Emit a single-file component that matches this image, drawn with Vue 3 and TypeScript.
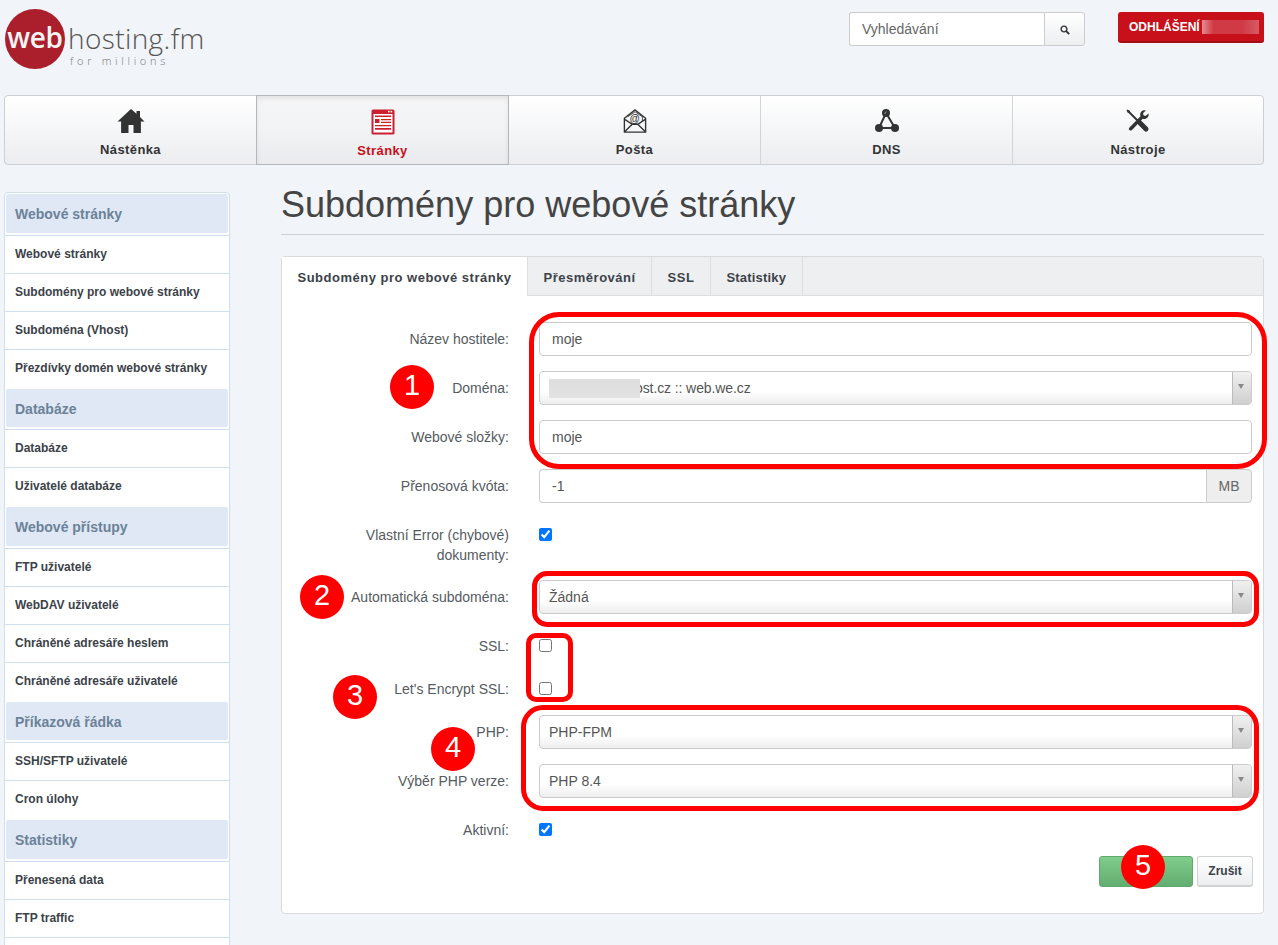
<script setup lang="ts">
interface Section { title: string; items: string[] }
const sections: Section[] = [
  { title: 'Webové stránky', items: ['Webové stránky', 'Subdomény pro webové stránky', 'Subdoména (Vhost)', 'Přezdívky domén webové stránky'] },
  { title: 'Databáze', items: ['Databáze', 'Uživatelé databáze'] },
  { title: 'Webové přístupy', items: ['FTP uživatelé', 'WebDAV uživatelé', 'Chráněné adresáře heslem', 'Chráněné adresáře uživatelé'] },
  { title: 'Příkazová řádka', items: ['SSH/SFTP uživatelé', 'Cron úlohy'] },
  { title: 'Statistiky', items: ['Přenesená data', 'FTP traffic', ''] },
]
const tabs = ['Subdomény pro webové stránky', 'Přesměrování', 'SSL', 'Statistiky']
</script>

<template>
  <div class="page">
    <header class="top">
      <div class="logo">
        <div class="logo-circle">web</div>
        <div class="logo-text">
          <div class="logo-name">hosting.fm</div>
          <div class="logo-sub">for millions</div>
        </div>
      </div>
      <div class="search">
        <input class="search-input" type="text" placeholder="Vyhledávání" />
        <button class="search-btn" type="button" aria-label="Hledat">
          <svg width="10" height="10" viewBox="0 0 10 10"><circle cx="4" cy="4" r="2.9" fill="none" stroke="#333" stroke-width="1.4"/><path d="M6.2 6.2 9.2 9.2" stroke="#333" stroke-width="1.9"/></svg>
        </button>
      </div>
      <button class="logout" type="button">ODHLÁŠENÍ <span class="logout-blur"></span></button>
    </header>

    <nav class="nav">
      <a class="nav-item">
        <svg class="nav-icon" width="30" height="26" viewBox="0 0 30 26"><path fill="#333" d="M15 1 1.5 13.5h3.6V25h7.4v-8h5v8h7.4V13.5h3.6L24 9V3h-3.5v2.8Z"/></svg>
        <span>Nástěnka</span>
      </a>
      <a class="nav-item active">
        <svg class="nav-icon" width="24" height="26" viewBox="0 0 24 26">
          <rect x="0.5" y="0.5" width="23" height="25" rx="1.5" fill="#cc2030"/>
          <rect x="2.5" y="5" width="19" height="18.5" fill="#fff"/>
          <rect x="17" y="1.8" width="1.6" height="1.6" fill="#fff"/><rect x="19.6" y="1.8" width="1.6" height="1.6" fill="#fff"/>
          <path fill="#cc2030" d="M4 6.5h16V8H4zM4 10h4.5v4H4zM10 10h10v1.2H10zM10 12.8h10V14H10zM4 16h16v1.2H4zM4 19h16v1.8H4z"/>
        </svg>
        <span>Stránky</span>
      </a>
      <a class="nav-item">
        <svg class="nav-icon" width="24" height="26" viewBox="0 0 26 26">
          <path fill="none" stroke="#333" stroke-width="1.5" d="M1.5 10 13 1l11.5 9v15h-23ZM1.5 25 10 16.5M24.5 25 16 16.5M1.5 11l8.5 5.5h6l8.5-5.5"/>
          <path fill="none" stroke="#333" stroke-width=".9" d="M5 8.5 13 3l8 5.5v5"/>
          <text x="13" y="14" text-anchor="middle" font-size="11" font-family="Liberation Sans" font-weight="700" fill="#333">@</text>
        </svg>
        <span>Pošta</span>
      </a>
      <a class="nav-item">
        <svg class="nav-icon" width="26" height="26" viewBox="0 0 26 26">
          <path fill="none" stroke="#333" stroke-width="2" d="M12 5 5 20h16Z"/>
          <circle cx="12" cy="5" r="4" fill="#333"/>
          <circle cx="5" cy="20" r="4" fill="#333"/>
          <circle cx="21" cy="20" r="4" fill="#333"/>
          <path d="M10.8 6 12 3.5" stroke="#fff" stroke-width="1" opacity=".5"/>
        </svg>
        <span>DNS</span>
      </a>
      <a class="nav-item">
        <svg class="nav-icon" width="26" height="26" viewBox="0 0 26 26">
          <path d="M3 3 13 13" stroke="#333" stroke-width="2"/>
          <path d="M2.5 1.5 1.5 2.5l1.5 2.5 1.5-.5.5-1.500Z" fill="#333"/>
          <path d="M15 15 21 21" stroke="#333" stroke-width="5" stroke-linecap="round"/>
          <path fill="#333" d="M23.5 5.5 20.5 8 18.5 7.3 18 5.3l2.8-2.8C18 1.7 15 3.7 15.2 6.8c0 .6.1 1 .3 1.5L4.5 19.5C2.8 21.3 5.1 23.8 7 22L17.8 10.8c3.2 1 6.500-1.500 5.700-5.300Z"/>
        </svg>
        <span>Nástroje</span>
      </a>
    </nav>

    <div class="content">
      <aside class="sidebar">
        <template v-for="s in sections" :key="s.title">
          <div class="side-head-wrap"><div class="side-head">{{ s.title }}</div></div>
          <a v-for="(it, i) in s.items" :key="it" class="side-item" :class="{ last: i === s.items.length - 1 }">{{ it }}</a>
        </template>
      </aside>

      <main class="main">
        <h1 class="title">Subdomény pro webové stránky</h1>
        <section class="panel">
          <div class="tabs">
            <a v-for="(t, i) in tabs" :key="t" class="tab" :class="{ on: i === 0 }">{{ t }}</a>
          </div>
          <form class="form" @submit.prevent>
            <div class="row">
              <label class="lbl">Název hostitele:</label>
              <input class="ctl" type="text" value="moje" />
            </div>
            <div class="row">
              <label class="lbl">Doména:</label>
              <div class="sel"><span class="blur"></span><span class="after-blur">ost.cz :: web.we.cz</span><i class="arrow"></i></div>
            </div>
            <div class="row">
              <label class="lbl">Webové složky:</label>
              <input class="ctl" type="text" value="moje" />
            </div>
            <div class="row">
              <label class="lbl">Přenosová kvóta:</label>
              <div class="group">
                <input class="ctl grp-input" type="text" value="-1" />
                <span class="addon">MB</span>
              </div>
            </div>
            <div class="row tall">
              <label class="lbl">Vlastní Error (chybové)<br />dokumenty:</label>
              <div class="chk"><input type="checkbox" checked /></div>
            </div>
            <div class="row">
              <label class="lbl">Automatická subdoména:</label>
              <div class="sel">Žádná<i class="arrow"></i></div>
            </div>
            <div class="row short">
              <label class="lbl">SSL:</label>
              <div class="chk"><input type="checkbox" /></div>
            </div>
            <div class="row short">
              <label class="lbl">Let's Encrypt SSL:</label>
              <div class="chk"><input type="checkbox" /></div>
            </div>
            <div class="row">
              <label class="lbl">PHP:</label>
              <div class="sel">PHP-FPM<i class="arrow"></i></div>
            </div>
            <div class="row">
              <label class="lbl">Výběr PHP verze:</label>
              <div class="sel">PHP 8.4<i class="arrow"></i></div>
            </div>
            <div class="row short">
              <label class="lbl">Aktivní:</label>
              <div class="chk"><input type="checkbox" checked /></div>
            </div>
            <div class="actions">
              <button class="save" type="button"></button>
              <button class="cancel" type="button">Zrušit</button>
            </div>
          </form>
        </section>
      </main>
    </div>

    <div class="ring r1"></div>
    <div class="ring r2"></div>
    <div class="ring r3"></div>
    <div class="ring r4"></div>
    <div class="num n1">1</div>
    <div class="num n2">2</div>
    <div class="num n3">3</div>
    <div class="num n4">4</div>
    <div class="num n5">5</div>
  </div>
</template>

<style>
html, body { margin: 0; background: #f1f4f8; }
</style>

<style scoped>
.page { position: relative; height: 945px; width: 1278px; overflow: hidden; box-sizing: border-box; padding: 0 14px 0 4px; font-family: "Liberation Sans", Arial, sans-serif; color: #333; background: #f1f4f8; }
.top { height: 95px; display: flex; align-items: flex-start; }
.logo { position: relative; display: flex; width: 845px; height: 95px; }
.logo-circle { width: 60px; height: 60px; margin: 9px 0 0 1px; border-radius: 50%; background: #ab1f2d; color: #f4f4f4; font: 600 28px/56px "Open Sans", sans-serif; text-align: center; letter-spacing: -0.3px; }
.logo-text { margin-left: 3px; }
.logo-name { margin-top: 22px; font: 300 28px/32px "Open Sans", sans-serif; color: #555; letter-spacing: .4px; }
.logo-sub { margin: 1px 0 0 2px; font: 300 11px/12px "Open Sans", sans-serif; letter-spacing: 3.7px; color: #777; }
.search { display: flex; margin-top: 12px; height: 34px; width: 236px; }
.search-input { flex: 1; min-width: 0; box-sizing: border-box; height: 34px; border: 1px solid #ccc; border-right: 0; border-radius: 3px 0 0 3px; padding: 0 12px; font: 14px "Liberation Sans", sans-serif; color: #555; background: #fff; outline: none; }
.search-input::placeholder { color: #666; opacity: 1; }
.search-btn { width: 41px; height: 34px; box-sizing: border-box; border: 1px solid #ccc; border-radius: 0 3px 3px 0; background: linear-gradient(#fff, #eceef0); padding: 2px 0 0; display: flex; align-items: center; justify-content: center; }
.logout { margin: 12px 0 0 33px; width: 146px; height: 31px; box-sizing: border-box; border: 0; border-bottom: 2px solid #a30d15; border-radius: 3px; background: #c8101a; color: #fff; font: 700 12px "Liberation Sans", sans-serif; text-align: left; padding: 0 0 0 11px; white-space: nowrap; }
.logout-blur { display: inline-block; width: 57px; height: 14px; vertical-align: -3px; margin-left: -1px; background: linear-gradient(90deg, #e58d92, #d03a45 20%, #cf3a45 70%, #d75b64); }

.nav { display: flex; height: 70px; box-sizing: border-box; border: 1px solid #ccd0d4; border-radius: 4px; background: linear-gradient(#fff, #ebedf0); }
.nav-item { width: 252px; box-sizing: border-box; border-right: 1px solid #d2d5d8; display: flex; flex-direction: column; align-items: center; font-size: 13px; font-weight: 700; color: #333; padding-top: 12px; letter-spacing: .4px; }
.nav-item:first-child { border-right: 0; width: 251px; }
.nav-item:last-child { border-right: 0; flex: 1; }
.nav-icon { height: 26px; display: block; margin-bottom: 7px; }
.nav-item span { line-height: 18px; }
.nav-item.active { color: #c8101a; margin: -1px 0; height: 70px; width: 253px; border: 1px solid #b4b8bc; border-radius: 0; box-shadow: inset 0 3px 5px rgba(0,0,0,.08); background: linear-gradient(#f6f6f7, #f2f3f5 50%, #e9ebee); padding-top: 13px; }

.content { display: flex; margin-top: 27px; align-items: flex-start; }
.sidebar { width: 226px; box-sizing: border-box; border: 1px solid #cfdfee; border-radius: 4px; background: #fff; flex: none; }
.side-head-wrap { height: 42.5px; box-sizing: border-box; padding: 1px 1px 2px; border-bottom: 1px solid #cfdfee; }
.side-head { height: 100%; background: #dfe8f4; border-radius: 2px; padding-left: 9px; font-size: 14px; font-weight: 700; color: #6b8299; line-height: 40px; }
.side-item { display: block; height: 38px; box-sizing: border-box; border-bottom: 1px solid #cfdfee; padding-left: 10px; font-size: 12px; font-weight: 700; color: #3c4249; line-height: 36px; white-space: nowrap; }
.side-item.last { border-bottom-color: transparent; }

.main { width: 983px; margin-left: 51px; flex: none; margin-top: -8px; }
.title { margin: 0; height: 51px; box-sizing: border-box; border-bottom: 1px solid #ccd0d4; font-size: 36px; font-weight: 400; line-height: 42px; color: #444; }
.panel { margin-top: 21px; border: 1px solid #d8dadd; border-radius: 4px; background: #fff; }
.tabs { display: flex; height: 39px; background: #eeeff1; border-bottom: 1px solid #dcdee0; box-sizing: border-box; }
.tab { padding: 0 15.5px; line-height: 41px; font-size: 13px; font-weight: 700; color: #3c4249; border-right: 1px solid #dcdee0; white-space: nowrap; letter-spacing: .5px; }
.tab:last-child { letter-spacing: .2px; }
.tab.on { background: #fff; height: 39px; }
.form { padding: 26px 11px 26px 0; }
.row { display: grid; grid-template-columns: 227px 1fr; column-gap: 30px; margin-bottom: 15px; min-height: 34px; }
.row.tall { height: 47px; }
.row.short { height: 28px; min-height: 28px; }
.lbl { text-align: right; font-size: 14px; line-height: 20px; color: #555b61; padding-top: 7px; }
.ctl { box-sizing: border-box; width: 100%; height: 34px; border: 1px solid #ccc; border-radius: 4px; padding: 0 12px; font: 14px "Liberation Sans", sans-serif; color: #555; background: #fff; outline: none; }
.group { display: flex; }
.grp-input { flex: 1; min-width: 0; border-radius: 4px 0 0 4px; border-right: 0; }
.addon { width: 46px; height: 34px; box-sizing: border-box; border: 1px solid #ccc; border-radius: 0 4px 4px 0; background: #eee; text-align: center; font-size: 14px; line-height: 32px; color: #666; }
.sel { position: relative; height: 34px; box-sizing: border-box; border: 1px solid #ccc; border-radius: 4px; padding-left: 9px; font-size: 14px; line-height: 32px; color: #555; background: linear-gradient(#fff 60%, #eee); white-space: nowrap; }
.arrow { position: absolute; top: 0; right: 0; bottom: 0; width: 18px; border-left: 1px solid #bbb; border-radius: 0 3px 3px 0; background: linear-gradient(#f0f0f0, #cfcfcf); }
.arrow::after { content: ""; position: absolute; left: 5px; top: 12px; border: 3.5px solid transparent; border-top: 5px solid #888; border-bottom: 0; }
.blur { display: inline-block; width: 91px; height: 19px; vertical-align: -5px; background: linear-gradient(#dedede, #e2e2e2); margin-right: -5px; position: relative; z-index: 1; }
.after-blur { position: relative; letter-spacing: -.1px; }
.chk { height: 28px; padding-top: 10px; box-sizing: border-box; }
.chk input { margin: 0; width: 13px; height: 13px; display: block; }
.actions { display: flex; justify-content: flex-end; margin-top: 15px; margin-right: -1px; gap: 4px; }
.save { width: 94px; height: 31px; box-sizing: border-box; border: 1px solid #5fa96c; border-radius: 3px; background: linear-gradient(#80cd8c, #62ad70); }
.cancel { width: 56px; height: 31px; box-sizing: border-box; border: 1px solid #d0d2d4; border-bottom-width: 2px; border-radius: 3px; background: linear-gradient(#fff, #eceef0); font: 700 12px "Liberation Sans", sans-serif; color: #3c4249; }

.ring { position: absolute; box-sizing: border-box; border: 5px solid #f00; }
.r1 { left: 529px; top: 312px; width: 738px; height: 157px; border-radius: 30px; }
.r2 { left: 532px; top: 571px; width: 727px; height: 56px; border-radius: 15px; }
.r3 { left: 526px; top: 633px; width: 47px; height: 69px; border-radius: 10px; }
.r4 { left: 521px; top: 705px; width: 738px; height: 106px; border-radius: 22px; }
.num { position: absolute; width: 44px; height: 44px; border-radius: 50%; background: #f00; color: #fff; font-size: 29px; line-height: 41px; text-align: center; }
.n1 { left: 390px; top: 365px; }
.n2 { left: 300px; top: 575px; }
.n3 { left: 333px; top: 675px; }
.n4 { left: 431px; top: 727px; }
.n5 { left: 1121px; top: 845px; }
</style>
